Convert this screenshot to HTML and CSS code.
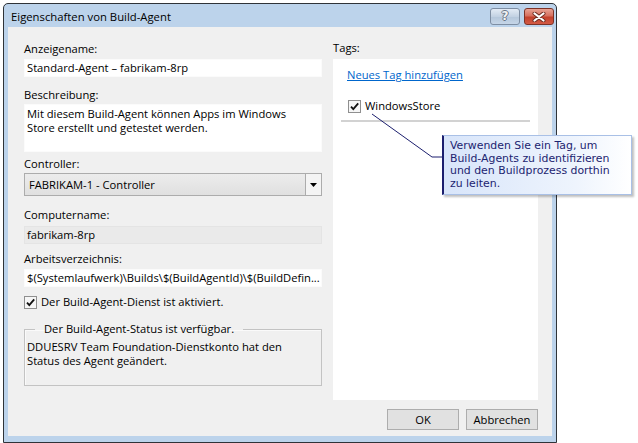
FILE: index.html
```html
<!DOCTYPE html>
<html lang="de">
<head>
<meta charset="utf-8">
<title>Eigenschaften von Build-Agent</title>
<link rel="stylesheet" href="styles.css">
</head>
<body>
<div class="window">
  <div class="titlebar">
    <span class="title">Eigenschaften von Build-Agent</span>
    <div class="caption-buttons">
      <span class="cbtn help">?</span>
      <span class="cbtn close">
        <svg width="14" height="10" viewBox="0 0 14 10">
          <path d="M2.5 1.5 L11.5 8.5 M11.5 1.5 L2.5 8.5" stroke="#6b2b20" stroke-width="4" stroke-linecap="round" fill="none"/>
          <path d="M2.5 1.5 L11.5 8.5 M11.5 1.5 L2.5 8.5" stroke="#ffffff" stroke-width="2.2" stroke-linecap="round" fill="none"/>
        </svg>
      </span>
    </div>
  </div>
  <div class="client">
    <div class="main">
      <div class="left">
        <div class="lbl">Anzeigename:</div>
        <div class="field">Standard-Agent – fabrikam-8rp</div>
        <div class="lbl gap-l">Beschreibung:</div>
        <div class="field area">Mit diesem Build-Agent können Apps im Windows<br>Store erstellt und getestet werden.</div>
        <div class="lbl gap-s">Controller:</div>
        <div class="select">
          <span class="select-text">FABRIKAM-1 - Controller</span>
          <span class="select-btn">
            <svg width="7" height="4" viewBox="0 0 7 4"><path d="M0 0 H7 L3.5 4 Z" fill="#000"/></svg>
          </span>
        </div>
        <div class="lbl gap-m">Computername:</div>
        <div class="field readonly">fabrikam-8rp</div>
        <div class="lbl gap-n">Arbeitsverzeichnis:</div>
        <div class="field">$(Systemlaufwerk)\Builds\$(BuildAgentId)\$(BuildDefin...</div>
        <div class="check-row gap-n">
          <svg class="checkbox" width="13" height="13" viewBox="0 0 13 13">
            <rect x="0.5" y="0.5" width="12" height="12" fill="#f6f6f6" stroke="#8f8f8f"/>
            <path d="M3 6.6 L5.3 9.2 L10.2 3.4" stroke="#111" stroke-width="1.8" fill="none"/>
          </svg>
          <span>Der Build-Agent-Dienst ist aktiviert.</span>
        </div>
        <fieldset class="group">
          <legend>Der Build-Agent-Status ist verfügbar.</legend>
          <p class="group-text">DDUESRV Team Foundation-Dienstkonto hat den<br>Status des Agent geändert.</p>
        </fieldset>
      </div>
      <div class="right">
        <div class="lbl">Tags:</div>
        <div class="tagpanel">
          <a class="link" href="#">Neues Tag hinzufügen</a>
          <div class="check-row tag-row">
            <svg class="checkbox" width="13" height="13" viewBox="0 0 13 13">
              <rect x="0.5" y="0.5" width="12" height="12" fill="#f6f6f6" stroke="#8f8f8f"/>
              <path d="M3 6.6 L5.3 9.2 L10.2 3.4" stroke="#111" stroke-width="1.8" fill="none"/>
            </svg>
            <span>WindowsStore</span>
          </div>
          <div class="sep"></div>
        </div>
      </div>
    </div>
    <div class="footer">
      <button class="btn">OK</button>
      <button class="btn">Abbrechen</button>
    </div>
  </div>
</div>
<svg class="callout-line" width="638" height="443" viewBox="0 0 638 443">
  <path d="M372 114 L432 157 L443 157" stroke="#1c1f6e" stroke-width="1" fill="none"/>
</svg>
<div class="callout">Verwenden Sie ein Tag, um<br>Build-Agents zu identifizieren<br>und den Buildprozess dorthin<br>zu leiten.</div>
</body>
</html>
```
FILE: styles.css
```css
* { box-sizing: border-box; }

html, body {
  margin: 0;
  background: #ffffff;
}

body {
  padding: 3px 0 0 3px;
  font-family: "Open Sans", "Noto Sans", sans-serif;
  font-size: 11.2px;
  color: #000;
  width: 638px;
  height: 443px;
  overflow: hidden;
  position: relative;
}

.window {
  width: 554px;
  height: 440px;
  border: 1px solid #2f3338;
  border-radius: 5px 5px 0 0;
  background: #bcd3eb;
  padding: 0 4px 6px 4px;
  display: flex;
  flex-direction: column;
}

.titlebar {
  height: 23px;
  display: flex;
  justify-content: space-between;
  align-items: flex-start;
  padding-left: 3px;
  margin-right: -2px;
}

.title {
  font-size: 11.3px;
  line-height: 16px;
  margin-top: 5px;
}

.caption-buttons {
  display: flex;
  gap: 4px;
  margin-top: 4px;
}

.cbtn {
  width: 30px;
  height: 17px;
  border-radius: 3px;
  display: flex;
  align-items: center;
  justify-content: center;
}

.help {
  border: 1px solid #7e8ea3;
  background: linear-gradient(#e3ebf5, #c3d2e3 50%, #b4c6da 51%, #c6d6e8);
  color: #f2f2f2;
  font-family: "DejaVu Sans", sans-serif;
  font-weight: bold;
  font-size: 12px;
  line-height: 15px;
  text-shadow: -1px 0 #6a7686, 1px 0 #6a7686, 0 -1px #6a7686, 0 1px #6a7686;
}

.close {
  border: 1px solid #7d3226;
  background: linear-gradient(#e8a394, #d6705f 45%, #c3412c 55%, #d35a45);
}

.client {
  flex: 1;
  background: #f0f0f0;
  display: flex;
  flex-direction: column;
}

.main {
  flex: 1;
  display: flex;
  padding-left: 16px;
  padding-right: 14px;
  gap: 11px;
}

.left {
  width: 298px;
  padding-top: 14px;
  display: flex;
  flex-direction: column;
}

.right {
  flex: 1;
  padding-top: 13px;
  display: flex;
  flex-direction: column;
}

.lbl {
  line-height: 16px;
  height: 16px;
  margin-bottom: 2px;
}

.gap-l { margin-top: 10px; margin-bottom: 1px; }
.gap-s { margin-top: 4px; margin-bottom: 1px; }
.gap-m { margin-top: 11px; margin-bottom: 3px; }
.gap-n { margin-top: 7px; }

.field {
  height: 18px;
  background: #ffffff;
  border: 1px solid #fbfbfb;
  padding: 0 2px;
  line-height: 16px;
  white-space: nowrap;
  overflow: hidden;
}

.field.area {
  height: 48px;
  line-height: 14px;
  padding-top: 2px;
  white-space: normal;
}

.field.readonly {
  background: #eaeaea;
  border-color: #e4e4e4;
}

.select {
  height: 23px;
  border: 1px solid #acacac;
  background: linear-gradient(#ececec, #e0e0e0);
  display: flex;
  align-items: center;
}

.select-text {
  flex: 1;
  padding-left: 4px;
  line-height: 16px;
}

.select-btn {
  width: 16px;
  height: 100%;
  border-left: 1px solid #acacac;
  background: #f4f4f4;
  display: flex;
  align-items: center;
  justify-content: center;
  padding-top: 1px;
}

.check-row {
  display: flex;
  align-items: center;
  gap: 4px;
  height: 16px;
  line-height: 16px;
}

.checkbox { flex: none; }

.group {
  margin: 11px 0 0 0;
  padding: 3px 2px 0 2px;
  border: 1px solid #c3c3c3;
  box-shadow: inset 1px 1px 0 #fafafa;
  height: 65px;
  min-width: 0;
}

.group legend {
  margin-left: 8px;
  padding: 0 9px;
  line-height: 16px;
}

.group-text {
  margin: 0;
  line-height: 14px;
}

.tagpanel {
  flex: 1;
  margin-top: 1px;
  background: #ffffff;
  padding: 8px 8px 0 8px;
  display: flex;
  flex-direction: column;
}

.link {
  color: #0066cc;
  text-decoration: underline;
  line-height: 16px;
  padding-left: 6px;
  align-self: flex-start;
}

.tag-row {
  margin-top: 15px;
  padding-left: 7px;
}

.sep {
  margin-top: 6px;
  height: 2px;
  background: #d2d2d2;
}

.footer {
  height: 36px;
  padding: 9px 14px 6px 0;
  display: flex;
  justify-content: flex-end;
  gap: 7px;
}

.btn {
  width: 72px;
  height: 21px;
  border: 1px solid #adadad;
  background: #e1e1e1;
  font-family: inherit;
  font-size: 11.2px;
  color: #000;
  padding: 0;
  line-height: 18px;
}

.callout-line {
  position: absolute;
  left: 0;
  top: 0;
  pointer-events: none;
}

.callout {
  position: absolute;
  left: 442px;
  top: 135px;
  width: 190px;
  height: 60px;
  padding: 4px 0 0 6px;
  background: linear-gradient(90deg, #d8e5fa, #eef4fd 70%, #ffffff);
  border: 1px solid #a9c0e6;
  border-left: 2px solid #1c1f6e;
  box-shadow: 2px 2px 2px rgba(0, 0, 0, 0.25);
  color: #1c2470;
  font-family: "DejaVu Sans", Verdana, sans-serif;
  font-size: 10.9px;
  line-height: 12.7px;
}
```
